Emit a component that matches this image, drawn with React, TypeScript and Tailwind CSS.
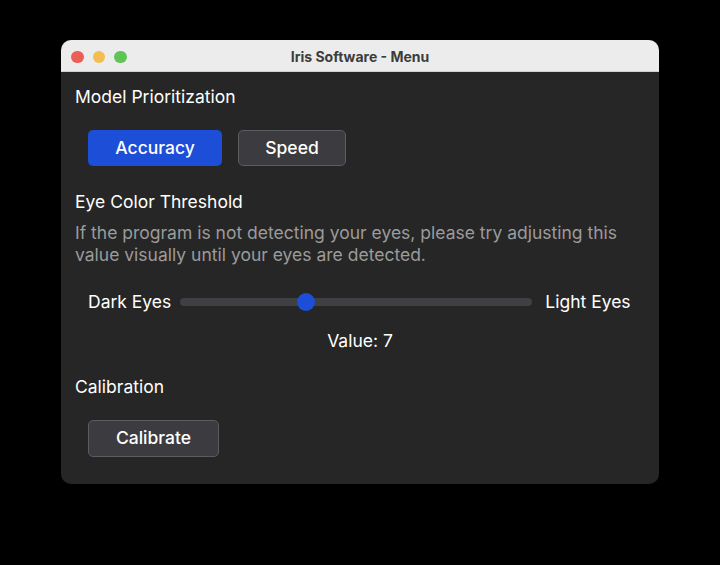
import { useState } from 'react'

export default function App() {
  const [mode, setMode] = useState('accuracy')
  const value = 7
  // slider spans 0..20, thumb sits at 7
  const t = value / 20

  return (
    <div className="h-[565px] w-[720px] bg-black pl-[61px] pt-[40px] font-['Inter',sans-serif]">
      <div className="flex h-[444px] w-[598px] flex-col overflow-hidden rounded-[10px] bg-[#262626]">
        {/* title bar */}
        <div className="relative flex h-[32px] items-center justify-center border-b border-[#d0d0d0] bg-[#ececec]">
          <div className="absolute left-[10px] top-[10.5px] flex gap-[9px]">
            <span className="h-[12.5px] w-[12.5px] rounded-full bg-[#ec5f57]" />
            <span className="h-[12.5px] w-[12.5px] rounded-full bg-[#f3bd4f]" />
            <span className="h-[12.5px] w-[12.5px] rounded-full bg-[#5fc454]" />
          </div>
          <span className="mt-[1px] text-[14px] font-bold text-[#3c3c3c]">Iris Software - Menu</span>
        </div>

        <div className="flex flex-col px-[14px] text-[17.5px] text-white">
          {/* Model Prioritization */}
          <div className="mt-[13px] leading-[24px]">Model Prioritization</div>
          <div className="ml-[13px] mt-[21px] flex gap-[16px]">
            <button
              onClick={() => setMode('accuracy')}
              className={
                mode === 'accuracy'
                  ? 'h-[36px] w-[134px] rounded-[5px] bg-[#1d4ed8] font-medium text-white'
                  : 'h-[36px] w-[134px] rounded-[5px] border border-[#5b5b60] bg-[#3b3b40] font-medium text-white'
              }
            >
              Accuracy
            </button>
            <button
              onClick={() => setMode('speed')}
              className={
                mode === 'speed'
                  ? 'h-[36px] w-[108px] rounded-[5px] bg-[#1d4ed8] font-medium text-white'
                  : 'h-[36px] w-[108px] rounded-[5px] border border-[#5b5b60] bg-[#3b3b40] font-medium text-white'
              }
            >
              Speed
            </button>
          </div>

          {/* Eye Color Threshold */}
          <div className="mt-[24px] leading-[24px]">Eye Color Threshold</div>
          <p className="mt-[8px] leading-[22px] text-[#9b9b9b]">
            If the program is not detecting your eyes, please try adjusting this
            <br />
            value visually until your eyes are detected.
          </p>

          <div className="ml-[13px] mt-[24px] flex h-[24px] items-center">
            <span>Dark Eyes</span>
            <div className="relative ml-[9px] h-[8px] w-[352px] rounded-full bg-[#3f3f44]">
              <span
                className="absolute top-1/2 h-[18px] w-[18px] -translate-x-1/2 -translate-y-1/2 rounded-full bg-[#1d4ed8]"
                style={{ left: `calc(9px + (100% - 18px) * ${t})` }}
              />
            </div>
            <span className="ml-[13px]">Light Eyes</span>
          </div>

          <div className="mt-[15px] text-center leading-[24px]">Value: {value}</div>

          {/* Calibration */}
          <div className="mt-[22px] leading-[24px]">Calibration</div>
          <div className="ml-[13px] mt-[21px]">
            <button className="h-[37px] w-[131px] rounded-[5px] border border-[#5b5b60] bg-[#3b3b40] font-medium text-white">
              Calibrate
            </button>
          </div>
        </div>
      </div>
    </div>
  )
}
